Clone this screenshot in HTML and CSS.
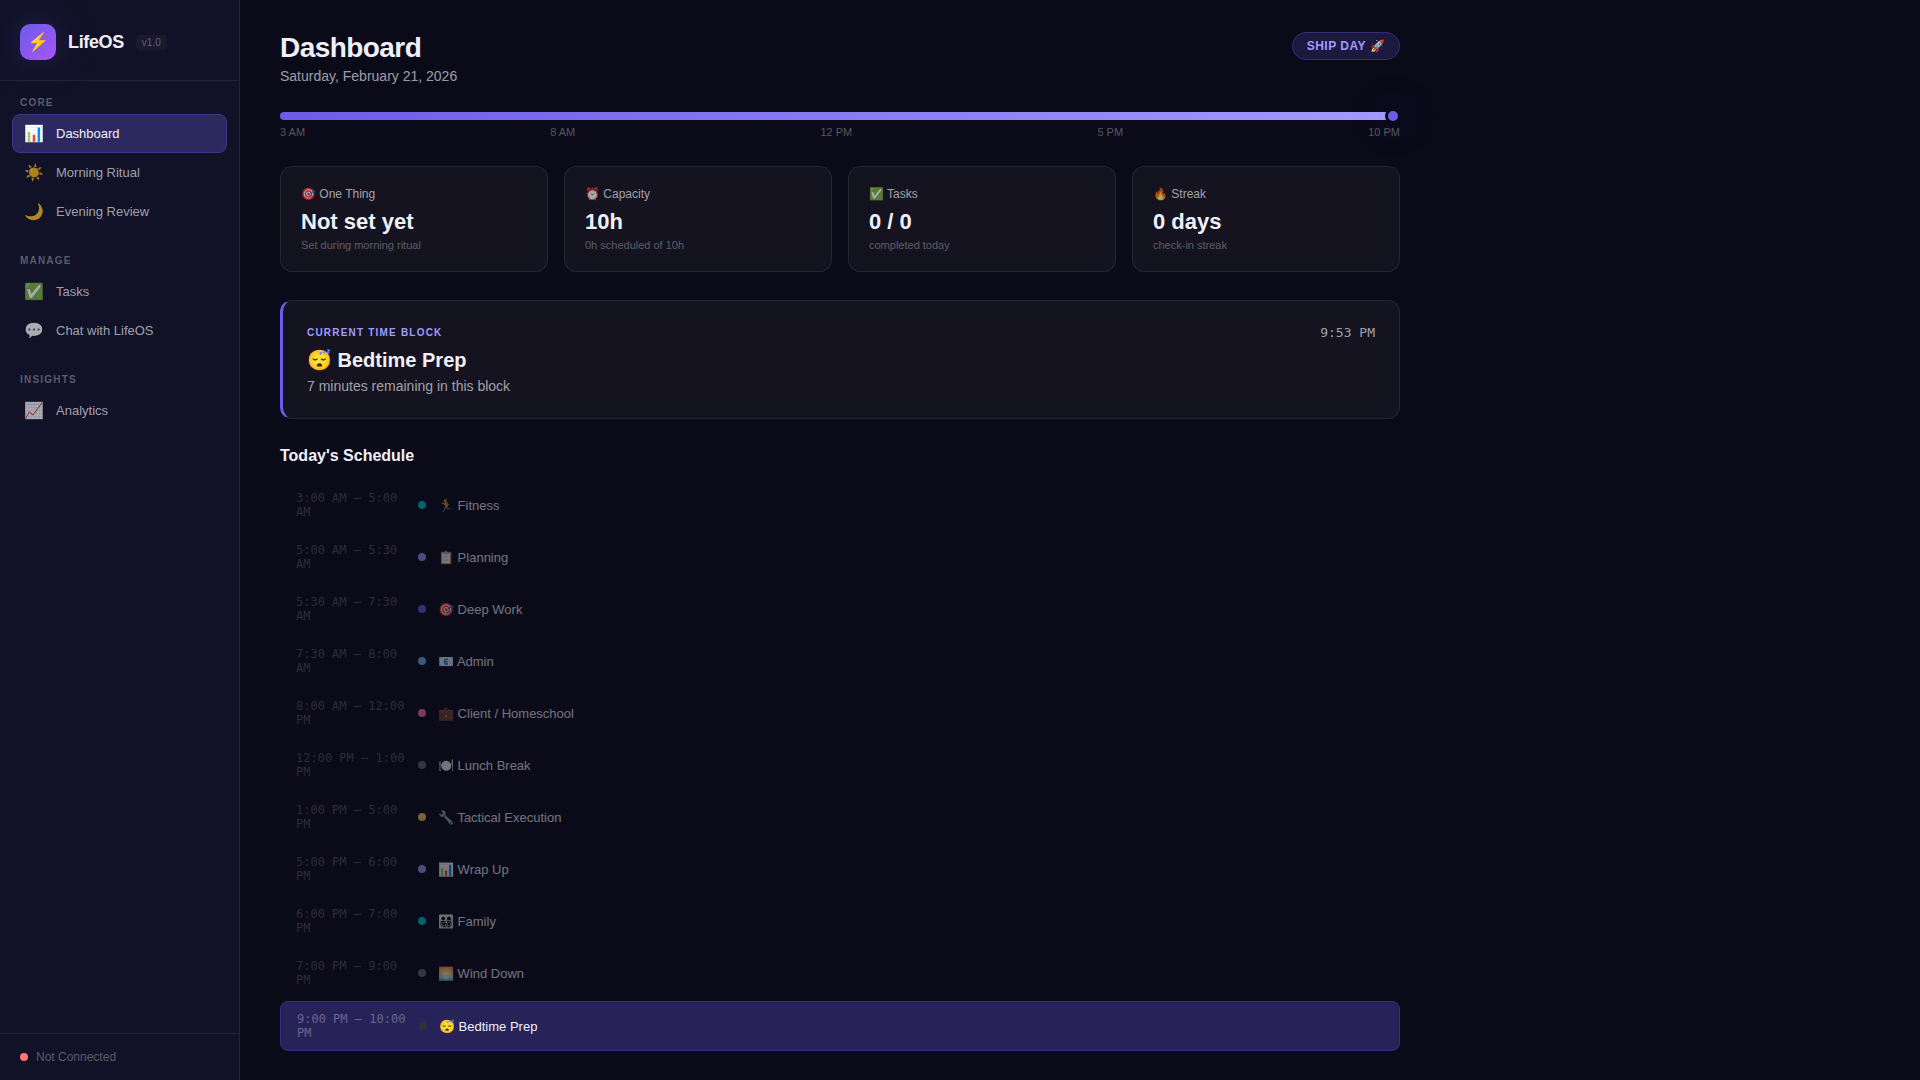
FILE: index.html
```html
<!DOCTYPE html>
<html lang="en">
<head>
  <meta charset="UTF-8">
  <meta name="viewport" content="width=device-width, initial-scale=1.0">
  <title>LifeOS</title>
  <link rel="stylesheet" href="styles.css">
</head>
<body>
  <aside class="sidebar">
    <div class="sidebar-header">
      <div class="logo">⚡</div>
      <span class="brand">LifeOS</span>
      <span class="version">v1.0</span>
    </div>

    <nav class="nav">
      <div class="nav-section">
        <div class="nav-title">Core</div>
        <a class="nav-item active" href="#dashboard"><span class="nav-icon">📊</span>Dashboard</a>
        <a class="nav-item" href="#morning"><span class="nav-icon">☀️</span>Morning Ritual</a>
        <a class="nav-item" href="#evening"><span class="nav-icon">🌙</span>Evening Review</a>
      </div>
      <div class="nav-section">
        <div class="nav-title">Manage</div>
        <a class="nav-item" href="#tasks"><span class="nav-icon">✅</span>Tasks</a>
        <a class="nav-item" href="#chat"><span class="nav-icon">💬</span>Chat with LifeOS</a>
      </div>
      <div class="nav-section">
        <div class="nav-title">Insights</div>
        <a class="nav-item" href="#analytics"><span class="nav-icon">📈</span>Analytics</a>
      </div>
    </nav>

    <div class="sidebar-footer">
      <span class="status-dot"></span>
      <span>Not Connected</span>
    </div>
  </aside>

  <main class="main">
    <header class="page-header">
      <div>
        <h1>Dashboard</h1>
        <p class="page-date">Saturday, February 21, 2026</p>
      </div>
      <div class="day-badge">SHIP DAY 🚀</div>
    </header>

    <div class="day-progress">
      <div class="progress-track">
        <div class="progress-fill" style="width: 99.4%"></div>
        <div class="progress-marker" style="left: 99.4%"></div>
      </div>
      <div class="progress-labels">
        <span>3 AM</span><span>8 AM</span><span>12 PM</span><span>5 PM</span><span>10 PM</span>
      </div>
    </div>

    <section class="stats">
      <div class="card stat">
        <div class="stat-label">🎯 One Thing</div>
        <div class="stat-value">Not set yet</div>
        <div class="stat-sub">Set during morning ritual</div>
      </div>
      <div class="card stat">
        <div class="stat-label">⏰ Capacity</div>
        <div class="stat-value">10h</div>
        <div class="stat-sub">0h scheduled of 10h</div>
      </div>
      <div class="card stat">
        <div class="stat-label">✅ Tasks</div>
        <div class="stat-value">0 / 0</div>
        <div class="stat-sub">completed today</div>
      </div>
      <div class="card stat">
        <div class="stat-label">🔥 Streak</div>
        <div class="stat-value">0 days</div>
        <div class="stat-sub">check-in streak</div>
      </div>
    </section>

    <section class="card current-block">
      <div class="block-top">
        <span class="block-label">Current Time Block</span>
        <span class="block-time">9:53 PM</span>
      </div>
      <div class="block-name">😴 Bedtime Prep</div>
      <div class="block-remaining">7 minutes remaining in this block</div>
    </section>

    <section>
      <h2>Today's Schedule</h2>
      <div class="schedule">
        <div class="slot past"><span class="slot-time">3:00 AM – 5:00 AM</span><span class="dot teal"></span><span class="slot-name">🏃 Fitness</span></div>
        <div class="slot past"><span class="slot-time">5:00 AM – 5:30 AM</span><span class="dot lavender"></span><span class="slot-name">📋 Planning</span></div>
        <div class="slot past"><span class="slot-time">5:30 AM – 7:30 AM</span><span class="dot purple"></span><span class="slot-name">🎯 Deep Work</span></div>
        <div class="slot past"><span class="slot-time">7:30 AM – 8:00 AM</span><span class="dot blue"></span><span class="slot-name">📧 Admin</span></div>
        <div class="slot past"><span class="slot-time">8:00 AM – 12:00 PM</span><span class="dot pink"></span><span class="slot-name">💼 Client / Homeschool</span></div>
        <div class="slot past"><span class="slot-time">12:00 PM – 1:00 PM</span><span class="dot gray"></span><span class="slot-name">🍽️ Lunch Break</span></div>
        <div class="slot past"><span class="slot-time">1:00 PM – 5:00 PM</span><span class="dot yellow"></span><span class="slot-name">🔧 Tactical Execution</span></div>
        <div class="slot past"><span class="slot-time">5:00 PM – 6:00 PM</span><span class="dot lavender"></span><span class="slot-name">📊 Wrap Up</span></div>
        <div class="slot past"><span class="slot-time">6:00 PM – 7:00 PM</span><span class="dot teal"></span><span class="slot-name">👨‍👩‍👧‍👦 Family</span></div>
        <div class="slot past"><span class="slot-time">7:00 PM – 9:00 PM</span><span class="dot gray"></span><span class="slot-name">🌅 Wind Down</span></div>
        <div class="slot current"><span class="slot-time">9:00 PM – 10:00 PM</span><span class="dot dark"></span><span class="slot-name">😴 Bedtime Prep</span></div>
      </div>
    </section>
  </main>
</body>
</html>
```
FILE: styles.css
```css
:root {
  --bg: #0a0a18;
  --sidebar: #111127;
  --border: rgba(255, 255, 255, 0.08);
  --text: #f0f0f8;
  --text-dim: rgba(240, 240, 248, 0.65);
  --text-muted: rgba(240, 240, 248, 0.34);
  --accent: #6c5ce7;
  --accent-light: #a29bfe;
}

* {
  box-sizing: border-box;
  margin: 0;
  padding: 0;
}

body {
  display: flex;
  min-height: 100vh;
  background: var(--bg);
  color: var(--text);
  font-family: "Liberation Sans", Arial, sans-serif;
}

/* Sidebar */
.sidebar {
  display: flex;
  flex-direction: column;
  flex: none;
  width: 240px;
  height: 100vh;
  position: sticky;
  top: 0;
  background: var(--sidebar);
  border-right: 1px solid var(--border);
}
.sidebar-header {
  display: flex;
  align-items: center;
  gap: 12px;
  padding: 24px 20px 20px;
  border-bottom: 1px solid var(--border);
}
.logo {
  display: flex;
  align-items: center;
  justify-content: center;
  width: 36px;
  height: 36px;
  border-radius: 10px;
  background: linear-gradient(135deg, #6c5ce7, #a855f7);
  box-shadow: 0 0 40px rgba(108, 92, 231, 0.25);
  font-size: 18px;
}
.brand {
  font-size: 18px;
  font-weight: 700;
  letter-spacing: -0.02em;
}
.version {
  padding: 2px 6px;
  border-radius: 4px;
  background: rgba(255, 255, 255, 0.04);
  color: var(--text-muted);
  font-size: 10px;
}
.nav {
  flex: 1;
  padding: 16px 12px;
}
.nav-section {
  margin-bottom: 24px;
}
.nav-title {
  padding: 0 8px;
  margin-bottom: 5px;
  color: var(--text-muted);
  font-size: 10px;
  font-weight: 600;
  line-height: 12px;
  letter-spacing: 0.12em;
  text-transform: uppercase;
}
.nav-item {
  display: flex;
  align-items: center;
  gap: 11px;
  height: 39px;
  padding: 0 10px;
  border: 1px solid transparent;
  border-radius: 8px;
  color: var(--text-dim);
  font-size: 13px;
  text-decoration: none;
}
.nav-item.active {
  background: #2c2860;
  border-color: #40358c;
  color: var(--text);
}
.nav-icon {
  width: 22px;
  font-size: 16px;
  text-align: center;
}
.sidebar-footer {
  display: flex;
  align-items: center;
  gap: 8px;
  padding: 16px 20px;
  border-top: 1px solid var(--border);
  color: var(--text-muted);
  font-size: 12px;
}
.status-dot {
  width: 8px;
  height: 8px;
  border-radius: 50%;
  background: #ff7675;
}

/* Main */
.main {
  flex: 1;
  max-width: 1200px;
  padding: 32px 40px 28px;
}
.page-header {
  display: flex;
  align-items: flex-start;
  justify-content: space-between;
  margin-bottom: 28px;
}
h1 {
  font-size: 28px;
  line-height: 32px;
  letter-spacing: -0.02em;
  margin-bottom: 4px;
}
.page-date {
  color: var(--text-dim);
  font-size: 14px;
  line-height: 16px;
}
.day-badge {
  padding: 6px 14px;
  border: 1px solid #352c7c;
  border-radius: 20px;
  background: #1c193f;
  color: var(--accent-light);
  font-size: 12px;
  font-weight: 600;
  line-height: 14px;
  letter-spacing: 0.04em;
}

/* Day progress */
.day-progress {
  margin-bottom: 28px;
}
.progress-track {
  position: relative;
  height: 8px;
  margin-bottom: 6px;
}
.progress-fill {
  height: 100%;
  border-radius: 4px;
  background: linear-gradient(90deg, var(--accent), var(--accent-light));
}
.progress-marker {
  position: absolute;
  top: 50%;
  width: 16px;
  height: 16px;
  border: 3px solid var(--bg);
  border-radius: 50%;
  background: var(--accent);
  box-shadow: 0 0 40px rgba(108, 92, 231, 0.25);
  transform: translate(-50%, -50%);
}
.progress-labels {
  display: flex;
  justify-content: space-between;
  color: var(--text-muted);
  font-size: 11px;
  line-height: 12px;
}

/* Cards */
.card {
  border: 1px solid var(--border);
  border-radius: 12px;
  background: #14131f;
  box-shadow: inset 0 0 30px rgba(108, 92, 231, 0.03);
}
.stats {
  display: grid;
  grid-template-columns: repeat(4, 1fr);
  gap: 16px;
  margin-bottom: 28px;
}
.stat {
  padding: 20px;
}
.stat-label {
  margin-bottom: 8px;
  color: var(--text-dim);
  font-size: 12px;
  line-height: 14px;
}
.stat-value {
  margin-bottom: 4px;
  font-size: 22px;
  font-weight: 700;
  line-height: 26px;
}
.stat-sub {
  color: var(--text-muted);
  font-size: 11px;
  line-height: 12px;
}
.current-block {
  padding: 24px;
  margin-bottom: 28px;
  border-left: 3px solid var(--accent);
}
.block-top {
  display: flex;
  align-items: center;
  justify-content: space-between;
  margin-bottom: 8px;
}
.block-label {
  color: var(--accent-light);
  font-size: 10px;
  font-weight: 700;
  line-height: 12px;
  letter-spacing: 0.12em;
  text-transform: uppercase;
}
.block-time {
  color: var(--text-dim);
  font-family: "DejaVu Sans Mono", monospace;
  font-size: 13px;
  line-height: 15px;
}
.block-name {
  margin-bottom: 6px;
  font-size: 20px;
  font-weight: 700;
  line-height: 24px;
}
.block-remaining {
  color: var(--text-dim);
  font-size: 14px;
  line-height: 16px;
}

/* Schedule */
h2 {
  margin-bottom: 16px;
  font-size: 16px;
  line-height: 18px;
}
.schedule {
  display: flex;
  flex-direction: column;
  gap: 4px;
}
.slot {
  display: flex;
  align-items: center;
  gap: 12px;
  padding: 10px 16px;
  border-radius: 8px;
  font-size: 13px;
}
.slot.past {
  opacity: 0.45;
}
.slot.current {
  border: 1px solid #372e80;
  background: #272258;
}
.slot-time {
  width: 110px;
  color: var(--text-muted);
  font-family: "DejaVu Sans Mono", monospace;
  font-size: 12px;
  line-height: 14px;
}
.dot {
  width: 8px;
  height: 8px;
  border-radius: 50%;
}
.teal { background: #00cec9; }
.lavender { background: #a29bfe; }
.purple { background: #6c5ce7; }
.blue { background: #74b9ff; }
.pink { background: #fd79a8; }
.gray { background: #636e72; }
.yellow { background: #fdcb6e; }
.dark { background: #2d3436; }
```
